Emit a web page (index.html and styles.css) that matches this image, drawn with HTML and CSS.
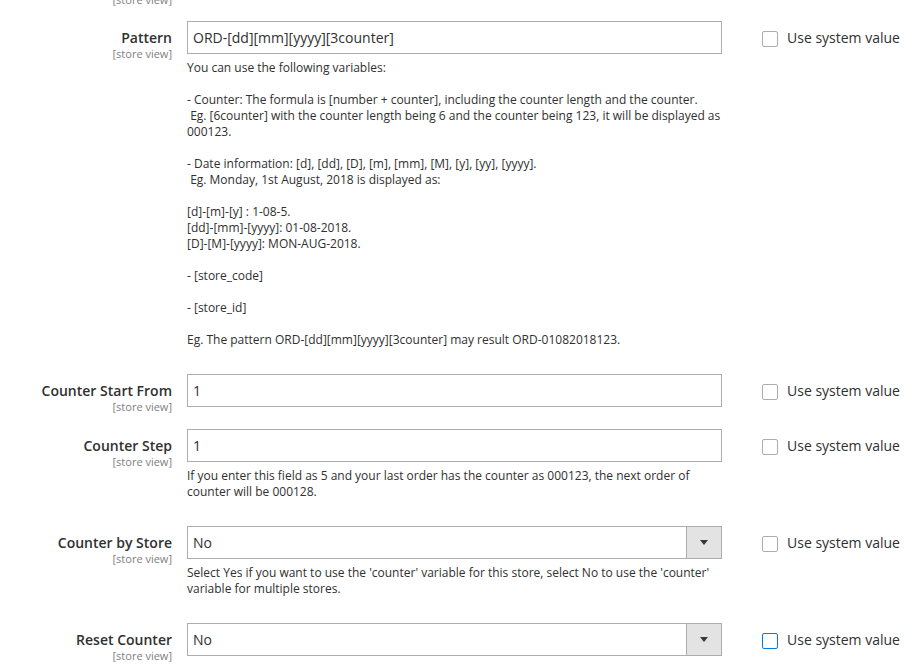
FILE: index.html
```html
<!DOCTYPE html>
<html>
<head>
<meta charset="utf-8">
<link rel="stylesheet" href="styles.css">
</head>
<body>
<div class="form">
  <div class="prev-scope"><span class="scope">[store view]</span></div>

  <div class="field">
    <div class="label"><span class="title">Pattern</span><span class="scope">[store view]</span></div>
    <div class="control">
      <div class="input">ORD-[dd][mm][yyyy][3counter]</div>
      <div class="note">You can use the following variables:

- Counter: The formula is [number + counter], including the counter length and the counter.
 Eg. [6counter] with the counter length being 6 and the counter being 123, it will be displayed as 000123.

- Date information: [d], [dd], [D], [m], [mm], [M], [y], [yy], [yyyy].
 Eg. Monday, 1st August, 2018 is displayed as:

[d]-[m]-[y] : 1-08-5.
[dd]-[mm]-[yyyy]: 01-08-2018.
[D]-[M]-[yyyy]: MON-AUG-2018.

- [store_code]

- [store_id]

Eg. The pattern ORD-[dd][mm][yyyy][3counter] may result ORD-01082018123.</div>
    </div>
    <label class="usesys"><span class="box"></span><span>Use system value</span></label>
  </div>

  <div class="field">
    <div class="label"><span class="title">Counter Start From</span><span class="scope">[store view]</span></div>
    <div class="control">
      <div class="input">1</div>
    </div>
    <label class="usesys"><span class="box"></span><span>Use system value</span></label>
  </div>

  <div class="field">
    <div class="label"><span class="title">Counter Step</span><span class="scope">[store view]</span></div>
    <div class="control">
      <div class="input">1</div>
      <div class="note">If you enter this field as 5 and your last order has the counter as 000123, the next order of counter will be 000128.</div>
    </div>
    <label class="usesys"><span class="box"></span><span>Use system value</span></label>
  </div>

  <div class="field">
    <div class="label"><span class="title">Counter by Store</span><span class="scope">[store view]</span></div>
    <div class="control">
      <div class="input select"><span class="val">No</span><span class="arrow"></span></div>
      <div class="note">Select Yes if you want to use the 'counter' variable for this store, select No to use the 'counter' variable for multiple stores.</div>
    </div>
    <label class="usesys"><span class="box"></span><span>Use system value</span></label>
  </div>

  <div class="field">
    <div class="label"><span class="title">Reset Counter</span><span class="scope">[store view]</span></div>
    <div class="control">
      <div class="input select"><span class="val">No</span><span class="arrow"></span></div>
    </div>
    <label class="usesys"><span class="box focus"></span><span>Use system value</span></label>
  </div>
</div>
</body>
</html>
```
FILE: styles.css
```css
html, body {
  margin: 0;
  padding: 0;
  background: #ffffff;
  overflow: hidden;
}
body {
  font-family: "Open Sans", "Liberation Sans", sans-serif;
  color: #303030;
}
.form {
  width: 918px;
}
.prev-scope {
  width: 172px;
  text-align: right;
  margin-top: -8px;
  margin-bottom: 15px;
  line-height: 12px;
}
.field {
  display: flex;
  align-items: flex-start;
  margin-bottom: 22px;
}
.label {
  width: 187px;
  box-sizing: border-box;
  padding-right: 15px;
  padding-top: 7px;
  margin-bottom: -6px;
  text-align: right;
  display: flex;
  flex-direction: column;
  align-items: flex-end;
}
.title {
  font-size: 14px;
  font-weight: 600;
  line-height: 19px;
  color: #303030;
}
.scope {
  font-size: 11px;
  line-height: 13px;
  color: #808080;
}
.control {
  width: 535px;
}
.input {
  box-sizing: border-box;
  height: 33px;
  border: 1px solid #adadad;
  padding: 0 5px;
  font-size: 14px;
  line-height: 31px;
  color: #303030;
  background: #fff;
}
.select {
  display: flex;
  padding-right: 0;
}
.select .val {
  flex: 1;
}
.select .arrow {
  width: 34px;
  background: #e3e3e3;
  border-left: 1px solid #adadad;
  position: relative;
}
.select .arrow::after {
  content: "";
  position: absolute;
  left: 13px;
  top: 13px;
  border-left: 4px solid transparent;
  border-right: 4px solid transparent;
  border-top: 5px solid #41362f;
}
.note {
  margin-top: 6px;
  margin-bottom: 4px;
  font-size: 12px;
  line-height: 16px;
  white-space: pre-wrap;
  color: #303030;
}
.usesys {
  margin-left: 40px;
  height: 33px;
  display: flex;
  align-items: center;
  font-size: 14px;
  color: #303030;
}
.box {
  width: 16px;
  height: 16px;
  box-sizing: border-box;
  border: 1px solid #adadad;
  border-radius: 2px;
  margin-right: 9px;
  margin-top: 2px;
  background: #fff;
}
.box.focus {
  border-color: #007bdb;
}
```
